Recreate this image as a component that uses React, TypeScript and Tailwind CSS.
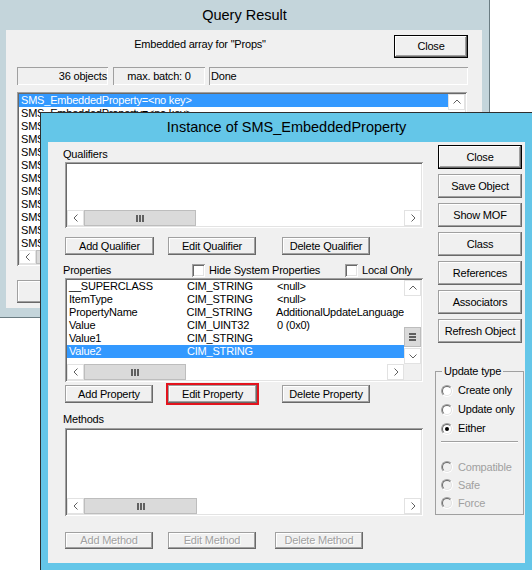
import React from 'react';

// classic win32 3D bevels
const raised =
  'bg-[#f0f0f0] shadow-[inset_-1px_-1px_#696969,inset_1px_1px_#a0a0a0,inset_-2px_-2px_#a0a0a0,inset_2px_2px_#ffffff]';
const defRaised =
  'bg-[#f0f0f0] shadow-[inset_0_0_0_1px_#000000,inset_-2px_-2px_#696969,inset_2px_2px_#ffffff,inset_-3px_-3px_#a0a0a0]';
const sunken =
  'shadow-[inset_1px_1px_#a0a0a0,inset_-1px_-1px_#ffffff,inset_2px_2px_#696969,inset_-2px_-2px_#e3e3e3]';
const field = 'shadow-[inset_1px_1px_#a0a0a0,inset_-1px_-1px_#ffffff]';

type Dir = 'left' | 'right' | 'up' | 'down';

const Chevron = ({ dir }: { dir: Dir }) => {
  const paths: Record<Dir, string> = {
    left: 'M4.5 0.5 L1 4 L4.5 7.5',
    right: 'M1.5 0.5 L5 4 L1.5 7.5',
    up: 'M0.5 4.5 L4 1 L7.5 4.5',
    down: 'M0.5 1.5 L4 5 L7.5 1.5',
  };
  const horiz = dir === 'left' || dir === 'right';
  return (
    <svg width={horiz ? 6 : 8} height={horiz ? 8 : 6} viewBox={horiz ? '0 0 6 8' : '0 0 8 6'}>
      <path d={paths[dir]} fill="none" stroke="#606060" strokeWidth="1" />
    </svg>
  );
};

const ArrowBox = ({ dir, className = '' }: { dir: Dir; className?: string }) => (
  <div className={`flex items-center justify-center bg-white border border-[#e2e2e2] ${className}`}>
    <Chevron dir={dir} />
  </div>
);

const GripV = () => (
  <svg width="8" height="7" viewBox="0 0 8 7">
    <rect x="0" y="0" width="2" height="7" fill="#606060" />
    <rect x="3" y="0" width="2" height="7" fill="#606060" />
    <rect x="6" y="0" width="2" height="7" fill="#606060" />
  </svg>
);

const GripH = () => (
  <svg width="7" height="8" viewBox="0 0 7 8">
    <rect x="0" y="0" width="7" height="2" fill="#606060" />
    <rect x="0" y="3" width="7" height="2" fill="#606060" />
    <rect x="0" y="6" width="7" height="2" fill="#606060" />
  </svg>
);

const HScroll = ({ thumb, className = '' }: { thumb: string; className?: string }) => (
  <div className={`flex h-[16px] bg-white ${className}`}>
    <ArrowBox dir="left" className="w-[17px] h-full" />
    <div className={`${thumb} h-full bg-[#dadada] border border-[#bdbdbd] flex items-center justify-center`}>
      <GripV />
    </div>
    <div className="flex-1" />
    <ArrowBox dir="right" className="w-[17px] h-full" />
  </div>
);

const Btn = ({
  children,
  className = '',
  isDefault = false,
  disabled = false,
}: {
  children?: React.ReactNode;
  className?: string;
  isDefault?: boolean;
  disabled?: boolean;
}) => (
  <button
    type="button"
    className={`flex items-center justify-center whitespace-nowrap ${isDefault ? defRaised : raised} ${
      disabled ? 'text-[#a0a0a0] [text-shadow:1px_1px_#ffffff]' : ''
    } ${className}`}
  >
    {children}
  </button>
);

const Radio = ({ checked = false, disabled = false }: { checked?: boolean; disabled?: boolean }) => (
  <div className="w-[12px] h-[12px] rounded-full border border-t-[#a0a0a0] border-l-[#a0a0a0] border-b-white border-r-white">
    <div
      className={`w-full h-full rounded-full border border-t-[#696969] border-l-[#696969] border-b-[#e3e3e3] border-r-[#e3e3e3] flex items-center justify-center ${
        disabled ? 'bg-[#f0f0f0]' : 'bg-white'
      }`}
    >
      {checked && <div className="w-[4px] h-[4px] rounded-full bg-black" />}
    </div>
  </div>
);

const Checkbox = () => <div className={`w-[13px] h-[13px] bg-white ${sunken}`} />;

const QueryResult = () => (
  <div className="absolute left-0 top-0 w-[490px] h-[318px] bg-[#c4d5db] border-r border-b border-[#6b7d83] flex flex-col">
    <div className="h-[30px] flex items-center justify-center text-[14.5px] tracking-normal">Query Result</div>
    <div className="ml-[6px] w-[476px] h-[278px] bg-[#f0f0f0] flex flex-col">
      <div className="mt-[5px] flex h-[23px]">
        <div className="flex-1 text-center pt-[3px]">{'Embedded array for "Props"'}</div>
        <Btn isDefault className="mr-[14px] w-[74px] h-[23px]">
          Close
        </Btn>
      </div>
      <div className="mt-[9px] ml-[11px] flex h-[18px]">
        <div className={`w-[91px] ${field} flex items-center justify-end pr-[1px]`}>36 objects</div>
        <div className={`ml-[5px] w-[92px] ${field} flex items-center justify-center`}>max. batch: 0</div>
        <div className={`ml-[4px] w-[259px] ${field} flex items-center pl-[2px]`}>Done</div>
      </div>
      <div className={`mt-[7px] ml-[11px] w-[450px] h-[174px] bg-white p-[2px] flex flex-col ${sunken}`}>
        <div className="flex flex-1">
          <div className="flex-1 overflow-hidden">
            {Array.from({ length: 12 }).map((_, i) => (
              <div
                key={i}
                className={`h-[13px] pl-[2px] whitespace-nowrap ${i === 0 ? 'bg-[#3399ff] text-white' : ''}`}
              >
                {'SMS_EmbeddedProperty=<no key>'}
              </div>
            ))}
          </div>
          <div className="w-[17px] flex flex-col bg-white">
            <ArrowBox dir="up" className="h-[16px]" />
          </div>
        </div>
        <HScroll thumb="w-[60px]" className="mr-[17px]" />
      </div>
      <Btn className="mt-[14px] ml-[11px] w-[80px] h-[23px]" />
    </div>
  </div>
);

const props = [
  { name: '__SUPERCLASS', type: 'CIM_STRING', value: '<null>' },
  { name: 'ItemType', type: 'CIM_STRING', value: '<null>' },
  { name: 'PropertyName', type: 'CIM_STRING', value: 'AdditionalUpdateLanguage' },
  { name: 'Value', type: 'CIM_UINT32', value: '0 (0x0)' },
  { name: 'Value1', type: 'CIM_STRING', value: '' },
  { name: 'Value2', type: 'CIM_STRING', value: '' },
];

const sideButtons = ['Close', 'Save Object', 'Show MOF', 'Class', 'References', 'Associators', 'Refresh Object'];

const InstanceWindow = () => (
  <div className="absolute left-[40px] top-[112px] w-[492px] h-[470px] bg-[#64c6e8] border-l border-t border-[#2e2e2e] flex flex-col">
    <div className="h-[29px] flex items-center justify-center text-[14.5px] tracking-normal">
      Instance of SMS_EmbeddedProperty
    </div>
    <div className="ml-[7px] w-[477px] h-[421px] bg-[#f0f0f0] flex">
      {/* left column */}
      <div className="w-[375px] pl-[15px]">
        <div className="mt-[6px] h-[13px]">Qualifiers</div>
        <div className={`mt-[1px] ml-[2px] w-[358px] h-[66px] bg-white p-[2px] flex flex-col ${sunken}`}>
          <div className="flex-1" />
          <HScroll thumb="w-[112px]" />
        </div>
        <div className="mt-[9px] ml-[2px] flex h-[18px]">
          <Btn className="w-[89px]">Add Qualifier</Btn>
          <Btn className="ml-[14px] w-[88px]">Edit Qualifier</Btn>
          <Btn className="ml-[26px] w-[88px]">Delete Qualifier</Btn>
        </div>

        <div className="mt-[9px] h-[13px] flex items-center">
          <div className="w-[129px]">Properties</div>
          <div className="w-[153px] flex items-center gap-[4px]">
            <Checkbox />
            <span className="whitespace-nowrap">Hide System Properties</span>
          </div>
          <div className="flex items-center gap-[4px]">
            <Checkbox />
            <span className="whitespace-nowrap">Local Only</span>
          </div>
        </div>
        <div className={`mt-[1px] ml-[2px] w-[358px] h-[104px] bg-white p-[2px] flex flex-col ${sunken}`}>
          <div className="flex h-[84px]">
            <div className="flex-1 overflow-hidden">
              {props.map((p, i) => (
                <div
                  key={p.name}
                  className={`h-[13px] flex whitespace-nowrap ${i === props.length - 1 ? 'bg-[#3399ff] text-white' : ''}`}
                >
                  <span className="w-[120px] pl-[2px]">{p.name}</span>
                  <span className="w-[90px]">{p.type}</span>
                  <span>{p.value}</span>
                </div>
              ))}
            </div>
            <div className="w-[17px] flex flex-col bg-white">
              <ArrowBox dir="up" className="h-[16px]" />
              <div className="h-[31px]" />
              <div className="h-[20px] bg-[#dadada] border border-[#bdbdbd] flex items-center justify-center">
                <GripH />
              </div>
              <div className="flex-1" />
              <ArrowBox dir="down" className="h-[16px]" />
            </div>
          </div>
          <div className="flex h-[16px]">
            <HScroll thumb="w-[102px]" className="flex-1" />
            <div className="w-[17px] bg-[#f0f0f0]" />
          </div>
        </div>
        <div className="mt-[3px] ml-[2px] flex h-[18px]">
          <Btn className="w-[88px]">Add Property</Btn>
          <Btn className="ml-[15px] w-[89px] outline-2 outline-solid outline-[#e3141e]">Edit Property</Btn>
          <Btn className="ml-[25px] w-[88px]">Delete Property</Btn>
        </div>

        <div className="mt-[10px] h-[13px]">Methods</div>
        <div className={`mt-[2px] ml-[2px] w-[358px] h-[88px] bg-white p-[2px] flex flex-col ${sunken}`}>
          <div className="flex-1" />
          <HScroll thumb="w-[113px]" />
        </div>
        <div className="mt-[16px] ml-[2px] flex h-[17px]">
          <Btn disabled className="w-[88px]">
            Add Method
          </Btn>
          <Btn disabled className="ml-[15px] w-[88px]">
            Edit Method
          </Btn>
          <Btn disabled className="ml-[19px] w-[88px]">
            Delete Method
          </Btn>
        </div>
      </div>

      {/* right column */}
      <div className="ml-[12px] w-[89px]">
        <div className="ml-[3px] mt-[3px] w-[84px] flex flex-col gap-[5px]">
          {sideButtons.map((b, i) => (
            <Btn key={b} isDefault={i === 0} className="h-[24px]">
              {b}
            </Btn>
          ))}
        </div>
        <fieldset className="mt-[22px] w-[89px] h-[150px] border border-[#a0a0a0]">
          <legend className="ml-[6px] px-[2px] leading-[13px]">Update type</legend>
          <div className="mt-[3px]">
            {[
              { label: 'Create only', checked: false },
              { label: 'Update only', checked: false },
              { label: 'Either', checked: true },
            ].map((r) => (
              <div key={r.label} className="h-[19px] flex items-center pl-[5px] gap-[5px]">
                <Radio checked={r.checked} />
                <span className="whitespace-nowrap">{r.label}</span>
              </div>
            ))}
          </div>
          <div className="mt-[3px] mx-[5px] h-[2px] border-t border-[#a0a0a0] border-b border-b-white" />
          <div className="mt-[15px] text-[#a0a0a0]">
            {['Compatible', 'Safe', 'Force'].map((r) => (
              <div key={r} className="h-[18px] flex items-center pl-[5px] gap-[5px]">
                <Radio disabled />
                <span className="whitespace-nowrap">{r}</span>
              </div>
            ))}
          </div>
        </fieldset>
      </div>
    </div>
  </div>
);

export default function App() {
  return (
    <div className="relative w-[532px] h-[570px] overflow-hidden bg-white font-['Liberation_Sans',Arial,sans-serif] text-[11px] leading-[13px] tracking-[-0.2px] text-black">
      <QueryResult />
      <InstanceWindow />
    </div>
  );
}
